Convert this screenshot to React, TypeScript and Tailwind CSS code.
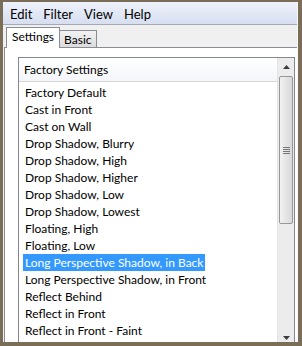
import React from "react";

const items = [
  "Factory Default",
  "Cast in Front",
  "Cast on Wall",
  "Drop Shadow, Blurry",
  "Drop Shadow, High",
  "Drop Shadow, Higher",
  "Drop Shadow, Low",
  "Drop Shadow, Lowest",
  "Floating, High",
  "Floating, Low",
  "Long Perspective Shadow, in Back",
  "Long Perspective Shadow, in Front",
  "Reflect Behind",
  "Reflect in Front",
  "Reflect in Front - Faint",
];

export default function App() {
  return (
    <div
      className="w-[302px] h-[346px] bg-[#7a6e58] pt-[2px] pl-[3px] pr-[4px] pb-[4px] overflow-hidden text-[12px] text-black"
      style={{ fontFamily: 'Lato, "Liberation Sans", sans-serif' }}
    >
      <div className="w-full h-full bg-[#f0f0f0] flex flex-col border-r border-[#f8f8f8] overflow-hidden">
        {/* menu bar */}
        <div className="h-[23px] shrink-0 flex items-center gap-[11px] pl-[7px] pt-[4px] bg-gradient-to-b from-[#eef2fa] to-[#d6def0] border-b border-[#a4a9b4] text-[13px]">
          <span>Edit</span>
          <span>Filter</span>
          <span>View</span>
          <span>Help</span>
        </div>

        {/* tabs */}
        <div className="flex items-end h-[22px] shrink-0 pl-[3px]">
          <div className="h-[21px] px-[5px] pb-[2px] bg-white border border-b-0 border-[#898c95] flex items-center relative top-[1px] z-10">
            Settings
          </div>
          <div className="h-[17px] px-[4px] pt-[2px] bg-gradient-to-b from-[#f2f2f2] to-[#dcdcdc] border border-l-0 border-b-0 border-[#898c95] flex items-center">
            Basic
          </div>
        </div>

        {/* panel */}
        <div className="flex-1 bg-white border-t border-l border-[#898c95] ml-[1px] pl-[13px] pt-[9px] flex">
          <div className="w-[277px] h-[290px] shrink-0 border border-[#828790] flex">
            <div className="flex-1 flex flex-col">
              <div className="h-[24px] flex items-center pl-[5px] border-b border-[#d5d5d5] bg-gradient-to-b from-white to-[#f4f6f9]">
                Factory Settings
              </div>
              <div className="flex flex-col pt-[2px]">
                {items.map((t) => (
                  <div key={t} className="h-[17px] flex items-center pl-[4px]">
                    <span
                      className={
                        t === "Long Perspective Shadow, in Back"
                          ? "bg-[#3399ff] text-white px-[2px] leading-[17px]"
                          : "px-[2px] leading-[17px]"
                      }
                    >
                      {t}
                    </span>
                  </div>
                ))}
              </div>
            </div>
            {/* scrollbar */}
            <div className="w-[17px] bg-[#ececec] border-l border-[#e4e4e4] flex flex-col">
              <div className="h-[17px] flex items-center justify-center">
                <svg width="7" height="4" viewBox="0 0 7 4">
                  <path d="M3.5 0 L7 4 L0 4 Z" fill="#3c3c3c" />
                </svg>
              </div>
              <div className="mx-[1px] mt-[1px] h-[148px] rounded-[2px] border border-[#979797] bg-gradient-to-r from-[#f2f2f2] to-[#d8d8d8] flex items-center justify-center">
                <div className="flex flex-col gap-[1px]">
                  <div className="w-[7px] h-[1px] bg-[#777]" />
                  <div className="w-[7px] h-[1px] bg-[#777]" />
                  <div className="w-[7px] h-[1px] bg-[#777]" />
                  <div className="w-[7px] h-[1px] bg-[#777]" />
                </div>
              </div>
              <div className="flex-1" />
              <div className="h-[17px] flex items-center justify-center">
                <svg width="7" height="4" viewBox="0 0 7 4">
                  <path d="M0 0 L7 0 L3.5 4 Z" fill="#3c3c3c" />
                </svg>
              </div>
            </div>
          </div>
        </div>
      </div>
    </div>
  );
}
